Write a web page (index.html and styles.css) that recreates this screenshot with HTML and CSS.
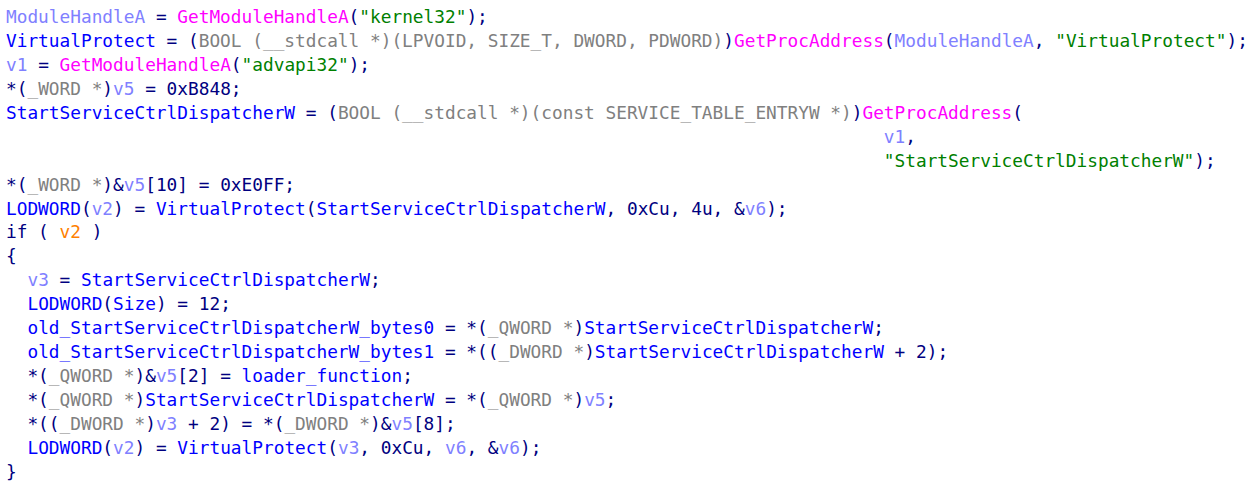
FILE: index.html
```html
<!DOCTYPE html>
<html>
<head>
<meta charset="utf-8">
<link rel="stylesheet" href="styles.css">
</head>
<body>
<div class="code">
<div class="ln"><span class="v">ModuleHandleA</span> = <span class="f">GetModuleHandleA</span>(<span class="s">"kernel32"</span>);</div>
<div class="ln"><span class="g">VirtualProtect</span> = (<span class="t">BOOL (__stdcall *)(LPVOID, SIZE_T, DWORD, PDWORD)</span>)<span class="f">GetProcAddress</span>(<span class="v">ModuleHandleA</span>, <span class="s">"VirtualProtect"</span>);</div>
<div class="ln"><span class="v">v1</span> = <span class="f">GetModuleHandleA</span>(<span class="s">"advapi32"</span>);</div>
<div class="ln">*(<span class="t">_WORD *</span>)<span class="v">v5</span> = 0xB848;</div>
<div class="ln"><span class="g">StartServiceCtrlDispatcherW</span> = (<span class="t">BOOL (__stdcall *)(const SERVICE_TABLE_ENTRYW *)</span>)<span class="f">GetProcAddress</span>(</div>
<div class="ln">                                                                                  <span class="v">v1</span>,</div>
<div class="ln">                                                                                  <span class="s">"StartServiceCtrlDispatcherW"</span>);</div>
<div class="ln">*(<span class="t">_WORD *</span>)&amp;<span class="v">v5</span>[10] = 0xE0FF;</div>
<div class="ln"><span class="g">LODWORD</span>(<span class="v">v2</span>) = <span class="g">VirtualProtect</span>(<span class="g">StartServiceCtrlDispatcherW</span>, 0xCu, 4u, &amp;<span class="v">v6</span>);</div>
<div class="ln">if ( <span class="h">v2</span> )</div>
<div class="ln">{</div>
<div class="ln">  <span class="v">v3</span> = <span class="g">StartServiceCtrlDispatcherW</span>;</div>
<div class="ln">  <span class="g">LODWORD</span>(<span class="g">Size</span>) = 12;</div>
<div class="ln">  <span class="g">old_StartServiceCtrlDispatcherW_bytes0</span> = *(<span class="t">_QWORD *</span>)<span class="g">StartServiceCtrlDispatcherW</span>;</div>
<div class="ln">  <span class="g">old_StartServiceCtrlDispatcherW_bytes1</span> = *((<span class="t">_DWORD *</span>)<span class="g">StartServiceCtrlDispatcherW</span> + 2);</div>
<div class="ln">  *(<span class="t">_QWORD *</span>)&amp;<span class="v">v5</span>[2] = <span class="g">loader_function</span>;</div>
<div class="ln">  *(<span class="t">_QWORD *</span>)<span class="g">StartServiceCtrlDispatcherW</span> = *(<span class="t">_QWORD *</span>)<span class="v">v5</span>;</div>
<div class="ln">  *((<span class="t">_DWORD *</span>)<span class="v">v3</span> + 2) = *(<span class="t">_DWORD *</span>)&amp;<span class="v">v5</span>[8];</div>
<div class="ln">  <span class="g">LODWORD</span>(<span class="v">v2</span>) = <span class="g">VirtualProtect</span>(<span class="v">v3</span>, 0xCu, <span class="v">v6</span>, &amp;<span class="v">v6</span>);</div>
<div class="ln">}</div>
</div>
</body>
</html>
```
FILE: styles.css
```css
html, body {
  margin: 0;
  padding: 0;
  background: #ffffff;
  overflow: hidden;
}
.code {
  padding: 5px 0 0 6px;
  font-family: "DejaVu Sans Mono", "Liberation Mono", monospace;
  font-size: 17.8px;
  line-height: 23.95px;
  color: #000080;
}
.ln {
  height: 23.95px;
  white-space: pre;
}
.v { color: #8080ff; }
.g { color: #0000ff; }
.f { color: #ff00ff; }
.s { color: #008000; }
.t { color: #808080; }
.h { color: #ff8000; }
```
